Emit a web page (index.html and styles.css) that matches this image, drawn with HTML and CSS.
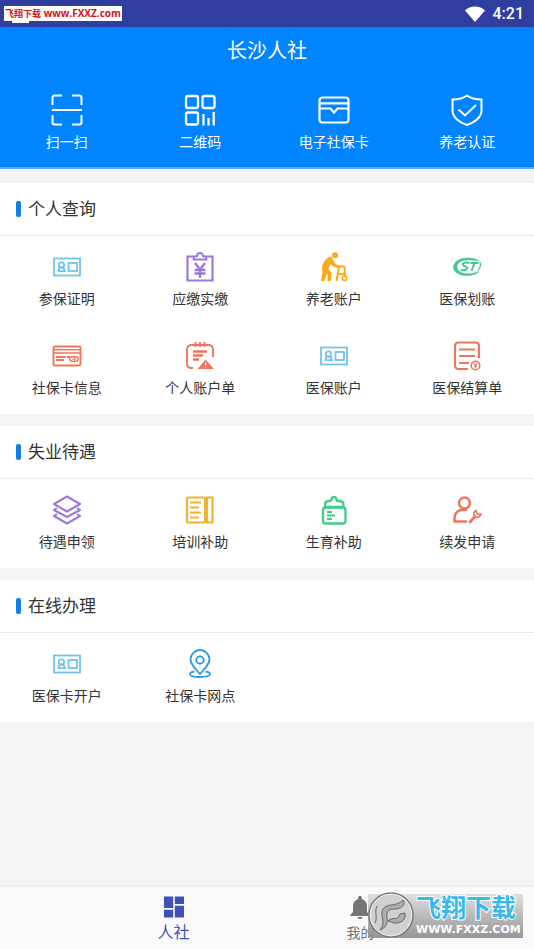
FILE: index.html
```html
<!DOCTYPE html>
<html lang="zh-CN">
<head>
<meta charset="utf-8">
<meta name="viewport" content="width=device-width, initial-scale=1">
<title>长沙人社</title>
<link rel="stylesheet" href="styles.css">
</head>
<body>
<svg class="defs" aria-hidden="true">
  <symbol id="id-card" viewBox="0 0 30 30">
    <g fill="none" stroke="currentColor" stroke-width="1.8">
      <rect x="2" y="6.500" width="26" height="17"/>
      <circle cx="9.500" cy="13" r="2.700"/>
      <path d="M5.500 19.200h8.500M6.500 18.500c0-2 1.300-3 3-3s3 1 3 3"/>
      <rect x="16.500" y="11" width="8.500" height="8"/>
    </g>
  </symbol>
</svg>
<div class="app">
  <div class="status">
    <span class="source"><b class="source-name">飞翔下载</b> <b>www.FXXZ.com</b></span>
    <svg class="wifi" viewBox="0 0 20 16"><path d="M0 4.500C5-1 15-1 20 4.500L10 16z" fill="#fff"/></svg>
    <span class="clock">4:21</span>
  </div>
  <header class="hero">
    <h1 class="title">长沙人社</h1>
    <nav class="grid quick">
      <a class="item" href="#scan">
        <svg class="icon" viewBox="0 0 32 32" fill="none" stroke="currentColor" stroke-width="2"><path d="M1.500 11V3.500a2 2 0 0 1 2-2H11M21 1.500h7.500a2 2 0 0 1 2 2V11M1.500 21v7.500a2 2 0 0 0 2 2H11M21 30.500h7.500a2 2 0 0 0 2-2V21M1 16h30"/></svg>
        <span>扫一扫</span></a>
      <a class="item" href="#qr">
        <svg class="icon" viewBox="0 0 32 32" fill="none" stroke="currentColor" stroke-width="2.300"><rect x="2" y="2" width="12" height="12" rx="2"/><rect x="18.500" y="2" width="12" height="12" rx="2"/><rect x="2" y="18.500" width="12" height="12" rx="2"/><path d="M19.500 20v11.500M24.500 24v7.500M29.700 18v13.500"/></svg>
        <span>二维码</span></a>
      <a class="item" href="#ecard">
        <svg class="icon" viewBox="0 0 32 32" fill="none" stroke="currentColor" stroke-width="2.200"><rect x="1.500" y="3.500" width="29" height="25" rx="3"/><path d="M2 9.300h28M2 14.500h10.500l3.500 4 3.500-4H30"/></svg>
        <span>电子社保卡</span></a>
      <a class="item" href="#verify">
        <svg class="icon" viewBox="0 0 32 32" fill="none" stroke="currentColor" stroke-width="2"><path d="M16 1.500c4 3 9 4 14.500 4v11C30.500 23 24 28.500 16 31 8 28.500 1.500 23 1.500 16.500v-11c5.500 0 10.500-1 14.500-4z"/><path d="M7.500 15.500l6.500 6L25 11"/></svg>
        <span>养老认证</span></a>
    </nav>
  </header>

  <main class="sections">
    <section class="card">
      <h2 class="heading">个人查询</h2>
      <div class="grid">
        <a class="item" href="#i1"><svg class="icon sky"><use href="#id-card"/></svg><span>参保证明</span></a>
        <a class="item" href="#i2">
          <svg class="icon purple" viewBox="0 0 30 30" fill="none" stroke="currentColor" stroke-width="2"><path d="M9 4.500H2.500v24h25v-24H21" stroke-width="2.200"/><path d="M8.500 7.500h13c0-2-1.500-3.500-3.500-3.500 0-1.500-1-3-3-3s-3 1.500-3 3c-2 0-3.500 1.500-3.500 3.500z" stroke-width="1.800"/><path d="M10 11l5 6.500 5-6.500M9.500 18h11M9.500 21.500h11M15 17.500V26" stroke-width="2.300"/></svg>
          <span>应缴实缴</span></a>
        <a class="item" href="#i3">
          <svg class="icon amber" viewBox="0 0 30 30"><circle cx="16" cy="3.300" r="3" fill="currentColor"/><path d="M12.500 4.500C7 5.500 3 11 3 17l.5 4-1.500 8h3.500l2-7 1.500 1-.5 6h3.500l.5-8-3-4 2-5 2.500 2.500 7 2 .5-2.500-5-2-3-5z" fill="currentColor"/><path d="M17.500 29l2.500-14q3-1.500 5.500 0l.5 9M19 22h6" fill="none" stroke="currentColor" stroke-width="2"/><circle cx="25.500" cy="26.300" r="2.200" fill="none" stroke="currentColor" stroke-width="1.600"/></svg>
          <span>养老账户</span></a>
        <a class="item" href="#i4">
          <svg class="icon green" viewBox="0 0 30 30" fill="none" stroke="currentColor"><path d="M27 9C24 6.800 20 6 15.500 6 7.500 6 1.500 10 1.500 15s6 8.600 13.500 8.600c5 0 9.500-1.300 12-4.100-3 1.500-7 2.300-11 2.300-6.500 0-11-2.800-11-6.800S9 8 15.500 8c4.500 0 8.500 0 11.500 1z" fill="currentColor" stroke-width=".6"/><path d="M17.500 11c-3-.6-6.300-.4-6.700 1.400-.4 1.900 4.800 1.500 4.500 3.800-.3 2-3.500 2.400-6.800 1.800" stroke-width="2"/><path d="M22.500 11l-3 8M18.500 11h8" stroke-width="2"/><path d="M27.800 10c1.200 2.500.5 6-2 8.500" stroke-width="1.300"/></svg>
          <span>医保划账</span></a>
        <a class="item" href="#i5">
          <svg class="icon coral" viewBox="0 0 30 30" fill="none" stroke="currentColor"><rect x="1.500" y="5.500" width="27" height="19" rx="1.500" stroke-width="1.900"/><path d="M2 8.800h26M2 12h26" stroke-width="1.500"/><path d="M4 16h10M4 19h8M15 16h3" stroke-width="1.900"/><ellipse cx="22" cy="18" rx="4.200" ry="2.500" stroke-width="1.500"/><path d="M20 18h4M22.500 16v4" stroke-width="1.200"/></svg>
          <span>社保卡信息</span></a>
        <a class="item" href="#i6">
          <svg class="icon coral" viewBox="0 0 30 30"><path d="M8 27H6.500q-4.500 0-4.500-4V9q0-5 5-5h16q5 0 5 5v7M10.500 1v5M15 1v5M19.500 1v5" fill="none" stroke="currentColor" stroke-width="1.900"/><path d="M8 10.500h14M8 14.500h10M8 18.500h6" fill="none" stroke="currentColor" stroke-width="2.300"/><path d="M20.500 18.500L29 28H12.500z" fill="currentColor"/><path d="M20.700 21.500v3M20.700 25.500v1" stroke="#fff" stroke-width="1"/></svg>
          <span>个人账户单</span></a>
        <a class="item" href="#i7"><svg class="icon sky"><use href="#id-card"/></svg><span>医保账户</span></a>
        <a class="item" href="#i8">
          <svg class="icon coral" viewBox="0 0 30 30" fill="none" stroke="currentColor" stroke-width="2.200"><path d="M27 17V5q0-3.500-3.500-3.500h-17Q3 1.500 3 5v19q0 4 4 4h9"/><path d="M7 8.500h16M7 15h16M7 22h10"/><circle cx="23.500" cy="24.500" r="4.300" stroke-width="1.600"/><path d="M21.800 22.500l1.700 2 1.700-2M23.500 24.500v3M21.800 25h3.400" stroke-width="1.100"/></svg>
          <span>医保结算单</span></a>
      </div>
    </section>

    <section class="card">
      <h2 class="heading">失业待遇</h2>
      <div class="grid">
        <a class="item" href="#j1">
          <svg class="icon purple" viewBox="0 0 30 30" fill="none" stroke="currentColor" stroke-width="2.100" stroke-linejoin="round"><path d="M15 1.500L28 9l-13 7.500L2 9z"/><path d="M5 13l-3 2 13 7 13-7-3-2M5 19l-3 2 13 7.500L28 21l-3-2"/></svg>
          <span>待遇申领</span></a>
        <a class="item" href="#j2">
          <svg class="icon gold" viewBox="0 0 30 30" fill="none" stroke="currentColor" stroke-width="2.200"><rect x="2" y="2.500" width="18" height="25" rx="1"/><path d="M5 7.500h11M5 12.500h9M5 17.500h11M5 22.500h9"/><path d="M22 2.500h5.500v25H22z"/></svg>
          <span>培训补助</span></a>
        <a class="item" href="#j3">
          <svg class="icon emerald" viewBox="0 0 30 30" fill="none" stroke="currentColor" stroke-width="2.300" stroke-linejoin="round"><rect x="4" y="12.500" width="22.500" height="16" rx="2.500"/><path d="M6 12V9.500q0-3 3.500-3.500h2.500q.5-4 3-4t3 4H21q3.500.5 3.500 3.500V12z"/><path d="M8 17h5M8 20.500h8M8 24h5" stroke-width="2.200"/></svg>
          <span>生育补助</span></a>
        <a class="item" href="#j4">
          <svg class="icon coral" viewBox="0 0 30 30" fill="none" stroke="currentColor" stroke-width="2.500" stroke-linecap="round"><circle cx="12.500" cy="8" r="5.500"/><path d="M14 26.500H2.500v-3.500q.5-7.500 8.500-8.500l3 .2"/><path d="M18 27l5-5.500" stroke-width="2.800"/><path d="M24.300 15.200c-3 1-3.500 5-1 6.500 2 1.500 5 .300 5.700-2.700l-3 .5-1.700-1.500z" stroke-width="1.600"/></svg>
          <span>续发申请</span></a>
      </div>
    </section>

    <section class="card">
      <h2 class="heading">在线办理</h2>
      <div class="grid">
        <a class="item" href="#k1"><svg class="icon sky"><use href="#id-card"/></svg><span>医保卡开户</span></a>
        <a class="item" href="#k2">
          <svg class="icon blue" viewBox="0 0 30 30" fill="none" stroke="currentColor" stroke-width="1.800"><path d="M15 25C9 18.500 5.500 14.500 5.500 10.500a9.500 9.500 0 0 1 19 0c0 4-3.500 8-9.500 14.500z"/><circle cx="15" cy="11" r="3.700"/><path d="M9.500 22.500c-3 .4-4.500 1.300-4.500 2.500 0 2 4 3 10 3s10-1 10-3c0-1.200-1.500-2.100-4.500-2.500"/></svg>
          <span>社保卡网点</span></a>
      </div>
    </section>
  </main>

  <nav class="tabs">
    <a class="tab active" href="#home"><svg class="tab-icon" viewBox="0 0 24 24"><path d="M2 1.500h9.200v11.500H2zM12.800 1.500H22v7.500h-9.200zM2 14.800h9.200v7.700H2zM12.800 10.800H22v11.700h-9.200z" fill="currentColor"/></svg><span>人社</span></a>
    <a class="tab" href="#me"><svg class="tab-icon" viewBox="0 0 24 24"><path d="M12 24c1.500 0 2.500-.8 2.500-2h-5c0 1.200 1 2 2.500 2zM19 17v-6c0-3.500-2-6.200-5.200-7V2.500a1.800 1.800 0 0 0-3.600 0V4C7 4.800 5 7.500 5 11v6l-2.500 2.500V21h19v-1.500z" fill="currentColor"/></svg><span>我的</span></a>
    <div class="stamp">
      <svg class="stamp-logo" viewBox="0 0 46 46"><circle cx="23" cy="23" r="22" fill="#d0d0d0" stroke="#777" stroke-width="1.500"/><circle cx="23" cy="23" r="20.800" fill="none" stroke="#eee" stroke-width="1"/><g fill="#adadad" stroke="#666" stroke-width="1" stroke-linejoin="round"><path d="M12 38C19 30 11 23 15 17c4-6 14-2 20-9 3 4-1 9-8 9-6 0-9 2-8 8s-1 11-7 13z"/><path d="M20 29c4-5 9 1 12-7l5-1c1 7-3 9-8 10-4 1-6-2-9-2z"/><path d="M9 14c-3 7 1 11-2 17" fill="none"/></g></svg>
      <div class="stamp-text"><b class="stamp-name">飞翔下载</b><b class="stamp-url">WWW.FXXZ.COM</b></div>
    </div>
  </nav>
</div>
</body>
</html>
```
FILE: styles.css
```css
* { box-sizing: border-box; }

body {
  margin: 0;
  background: #f4f4f4;
  color: #333;
  font-family: Roboto, "Noto Sans CJK SC", sans-serif;
  font-size: 14px;
}

a { color: inherit; text-decoration: none; }
.defs { display: none; }

.app {
  display: flex;
  flex-direction: column;
  min-height: 100vh;
}

.status {
  display: flex;
  align-items: center;
  gap: 8px;
  height: 27px;
  padding: 0 10px 0 4px;
  background: #303f9f;
  color: #fff;
}

.source {
  position: relative;
  margin-right: auto;
  padding: 0 1px;
  background: #fff;
  color: #d8121c;
  font: 10px/14px "Open Sans", "Noto Sans CJK SC", sans-serif;
  white-space: nowrap;
}

.source::after {
  content: "";
  position: absolute;
  top: 14px;
  left: 8px;
  width: 17px;
  height: 3px;
  background: #fff;
}

.source-name { font-size: 9px; }
.wifi { width: 20px; height: 16px; }
.clock { font-size: 16px; font-weight: 500; line-height: 27px; }

.hero {
  border-bottom: 2px solid #58adff;
  background: #0084ff;
  color: #fff;
}

.title {
  margin: 0;
  font-size: 20px;
  font-weight: 400;
  line-height: 48px;
  text-align: center;
}

.grid {
  display: grid;
  grid-template-columns: repeat(4, 1fr);
}

.item {
  display: flex;
  flex-direction: column;
  align-items: center;
  gap: 6px;
  height: 89px;
  padding-top: 16px;
  line-height: 22px;
}

.icon { width: 30px; height: 30px; }

.quick .item { height: 92px; padding-top: 19px; gap: 5px; }
.quick .icon { width: 32px; height: 32px; }

.sections {
  display: flex;
  flex: 1;
  flex-direction: column;
  gap: 12px;
  padding: 14px 0;
}

.card { background: #fff; }

.heading {
  display: flex;
  align-items: center;
  gap: 7px;
  height: 53px;
  margin: 0;
  padding-left: 16px;
  border-bottom: 1px solid #ececec;
  font-size: 17px;
  font-weight: 400;
  line-height: 24px;
}

.heading::before {
  content: "";
  width: 5px;
  height: 16px;
  border-radius: 2px;
  background: #0f80e4;
}

.sky { color: #72c4ee; }
.purple { color: #9b78dd; }
.amber { color: #f9ab18; }
.gold { color: #f0b232; }
.green { color: #42c78b; }
.emerald { color: #40cd87; }
.coral { color: #ee765c; }
.blue { color: #2f9be2; }

.tabs {
  position: relative;
  display: flex;
  justify-content: center;
  height: 64px;
  border-top: 2px solid #ededed;
  background: #fafafa;
}

.tab {
  display: flex;
  flex-direction: column;
  align-items: center;
  gap: 3px;
  width: 35%;
  padding-top: 8px;
  color: #757575;
  line-height: 22px;
}

.active { color: #3f51b5; font-size: 16px; }
.tab-icon { width: 24px; height: 24px; }

.stamp {
  position: absolute;
  right: 11px;
  bottom: 11px;
  display: flex;
  gap: 2px;
  width: 155px;
  height: 44px;
  background: linear-gradient(#d8d8d8cc, #8b8b8be6);
}

.stamp-logo { flex: none; width: 46px; height: 46px; margin-top: -2px; }

.stamp-text {
  display: flex;
  flex-direction: column;
  color: #fff;
  white-space: nowrap;
}

.stamp-name {
  color: #37b9ec;
  font-size: 25px;
  line-height: 30px;
  -webkit-text-stroke: 2px #fff;
  paint-order: stroke fill;
}

.stamp-url { font-family: "DejaVu Sans", sans-serif; font-size: 11px; line-height: 12px; }
```
